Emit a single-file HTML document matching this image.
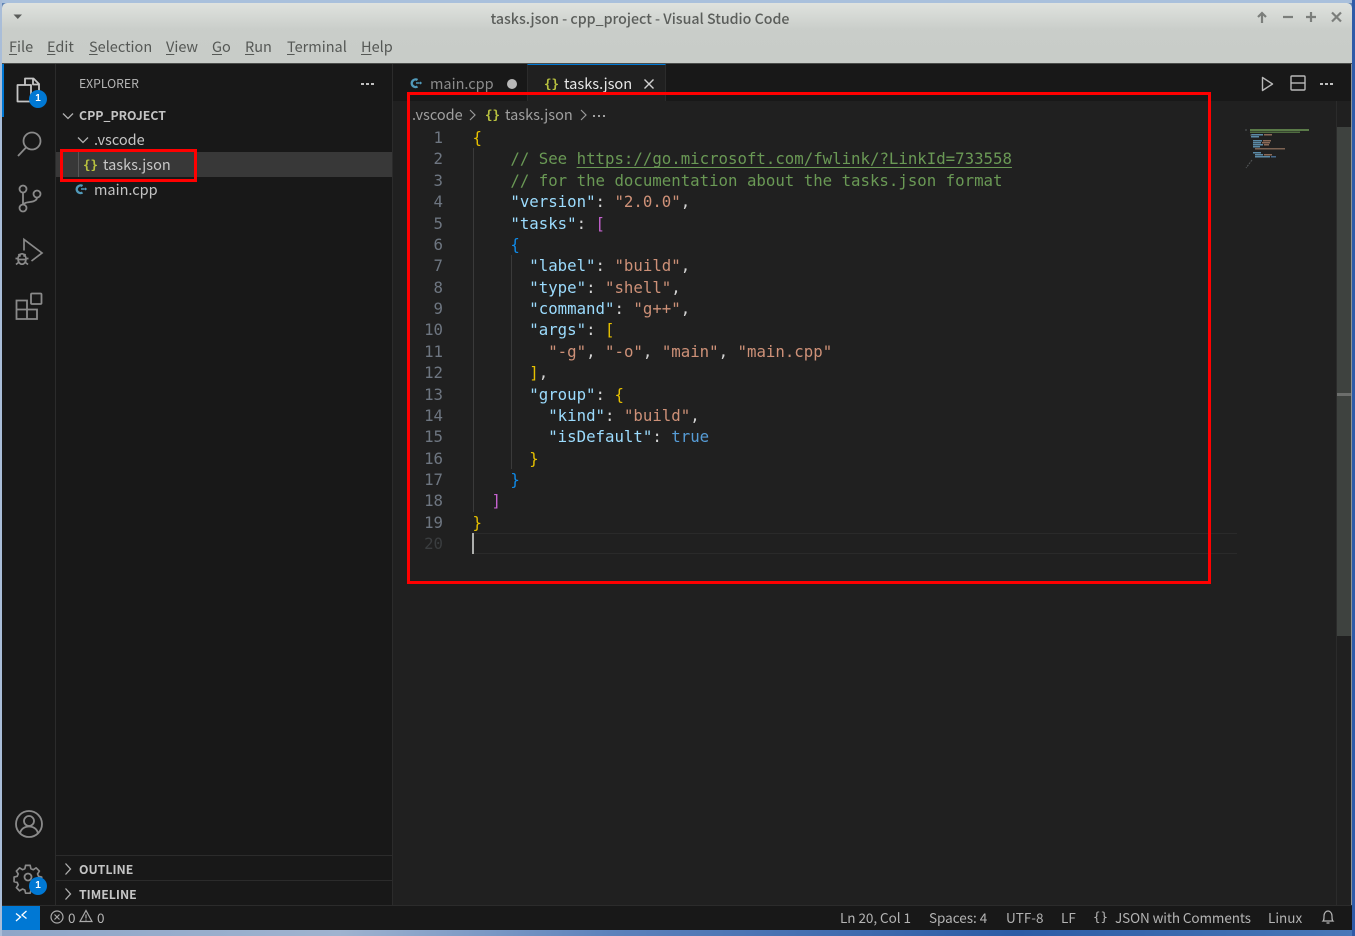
<!DOCTYPE html>
<html><head><meta charset="utf-8"><title>tasks.json - cpp_project - Visual Studio Code</title>
<style>
html,body{margin:0;padding:0;width:1355px;height:936px;overflow:hidden;background:#5f83b4}
*{box-sizing:border-box}
.a{position:absolute}
body{font-family:"Noto Sans CJK SC","Liberation Sans",sans-serif;position:relative}
#w{position:absolute;left:0;top:0;width:1355px;height:936px;filter:blur(.3px)}
.t{position:absolute;white-space:pre;line-height:20px}
u{text-underline-offset:2px;text-decoration-thickness:1px}
.ln{position:absolute;left:393px;width:50px;text-align:right;font:15.73px/21.37px "DejaVu Sans Mono",monospace;color:#6e7681}
.c{position:absolute;left:472.500px;white-space:pre;font:15.73px/21.37px "DejaVu Sans Mono",monospace;color:#d4d4d4}
.k{color:#9cdcfe}.s{color:#ce9178}.g{color:#6a9955}.b{color:#569cd6}.y{color:#e6c000}.p{color:#c562cf}.bl{color:#0f8bea}
svg{position:absolute;overflow:visible}
</style></head><body><div id="w">
<div class="a" style="left:0;top:0;width:1355px;height:3px;background:#a9c0dc"></div>
<div class="a" style="left:0;top:930px;width:1355px;height:6px;background:linear-gradient(90deg,#8ea6c8 0,#9fb3cf 25%,#5d82bb 45%,#2c5ca6 75%,#4a78b8 100%)"></div>
<div class="a" style="left:0;top:0;width:2px;height:936px;background:#a9bdd8"></div>
<div class="a" style="left:1352px;top:0;width:3px;height:936px;background:#2f5ba8"></div>

<!-- title bar -->
<div class="a" style="left:2px;top:3px;width:1350px;height:60px;background:linear-gradient(#dfe2de,#c9cdc9 45%,#c8ccc8);border-radius:5px 5px 0 0"></div>
<div class="a" style="left:2px;top:63px;width:1350px;height:1px;background:#4a4c4a"></div>
<svg style="left:13px;top:14px" width="10" height="6"><path d="M0.5 0.5H9L4.800 5z" fill="#5a5c5a"/></svg>
<div class="t" style="left:0;top:9px;width:1280px;text-align:center;font-size:14.200px;color:#5b5e5b;font-weight:500">tasks.json - cpp_project - Visual Studio Code</div>
<svg style="left:1256px;top:11px" width="90" height="13" fill="none" stroke="#7b7e7b" stroke-width="2.200">
<path d="M6 12V2M2 6l4-4 4 4"/><path d="M27 6h10"/><path d="M50 6h10M55 1v10"/><path d="M76 1.500l9 9M85 1.500l-9 9"/></svg>
<div style="font-size:14.500px;color:#555855">
<div class="t" style="left:9px;top:37px"><u>F</u>ile</div>
<div class="t" style="left:47px;top:37px"><u>E</u>dit</div>
<div class="t" style="left:89px;top:37px"><u>S</u>election</div>
<div class="t" style="left:166px;top:37px"><u>V</u>iew</div>
<div class="t" style="left:212px;top:37px"><u>G</u>o</div>
<div class="t" style="left:245px;top:37px"><u>R</u>un</div>
<div class="t" style="left:287px;top:37px"><u>T</u>erminal</div>
<div class="t" style="left:361px;top:37px"><u>H</u>elp</div>
</div>

<!-- activity bar -->
<div class="a" style="left:2px;top:64px;width:54px;height:841px;background:#181818;border-right:1px solid #2b2b2b"></div>
<div class="a" style="left:2px;top:64px;width:2px;height:53px;background:#0078d4"></div>
<svg style="left:16px;top:77px" width="26" height="28" fill="none" stroke="#c5c5c5" stroke-width="1.800" stroke-linejoin="round">
<path d="M9 8V1.500h8.500L23 7v15h-8"/><path d="M17 1.500V7.500h6"/><path d="M9 8H1.500v16.500H15V8z"/></svg>
<div class="a" style="left:29px;top:90px;width:18px;height:18px;border-radius:9px;background:#0078d4;color:#fff;font:bold 10px/18px 'Liberation Sans',sans-serif;text-align:center">1</div>
<svg style="left:16px;top:130px" width="28" height="28" fill="none" stroke="#8a8a8a" stroke-width="1.800">
<circle cx="16" cy="11" r="8.500"/><path d="M10 17.500L2 26"/></svg>
<svg style="left:17px;top:184px" width="26" height="30" fill="none" stroke="#8a8a8a" stroke-width="1.800">
<circle cx="6" cy="5" r="3.500"/><circle cx="6" cy="24" r="3.500"/><circle cx="20" cy="10" r="3.500"/><path d="M6 8.500V20.500M20 13.500c0 3-3 4-7 4.500-4 .5-6 1-7 3"/></svg>
<svg style="left:14px;top:238px" width="30" height="30" fill="none" stroke="#8a8a8a" stroke-width="1.700">
<path d="M10 12.500V1.500L28 15 17.500 23"/><ellipse cx="8" cy="21" rx="4" ry="5.200"/><path d="M4.500 16l2 2.500M11.500 16l-2 2.500M1.500 20.500h2.500M12 20.500h2.500M2 26.500l2.500-2M14 26.500l-2.500-2M4.500 21.500h7"/></svg>
<svg style="left:15px;top:292px" width="30" height="30" fill="none" stroke="#8a8a8a" stroke-width="1.800">
<rect x="16" y="1.500" width="10.500" height="10.500" rx="1"/><path d="M1.500 8.500h10.500v9h10v9.500H1.500zM1.500 17.500h10.500v9.500"/></svg>
<svg style="left:15px;top:810px" width="28" height="28" fill="none" stroke="#8a8a8a" stroke-width="1.800">
<circle cx="14" cy="14" r="13"/><circle cx="14" cy="11" r="5"/><path d="M5 23.500c1-5 5-7 9-7s8 2 9 7"/></svg>
<svg style="left:15px;top:864px" width="28" height="28" fill="none" stroke="#8a8a8a" stroke-width="1.800" stroke-linejoin="round">
<path d="M11.500 1.500h5l.8 3.600 2.600 1.100 3.100-2 3.500 3.500-2 3.100 1.100 2.600 3.400.8v5l-3.400.8-1.100 2.600 2 3.100-3.500 3.500-3.100-2-2.600 1.100-.8 3.400h-5l-.8-3.400-2.600-1.100-3.100 2-3.500-3.500 2-3.100-1.100-2.600-3.400-.8v-5l3.400-.8 1.100-2.600-2-3.100 3.500-3.500 3.100 2 2.600-1.100z" transform="scale(.92)"/><circle cx="13" cy="13" r="3.500"/></svg>
<div class="a" style="left:29px;top:877px;width:18px;height:18px;border-radius:9px;background:#0078d4;color:#fff;font:bold 10px/18px 'Liberation Sans',sans-serif;text-align:center">1</div>

<!-- sidebar -->
<div class="a" style="left:56px;top:64px;width:337px;height:841px;background:#181818;border-right:1px solid #2b2b2b"></div>
<div class="t" style="left:79px;top:73px;font-size:12.200px;color:#b5b5b5">EXPLORER</div>
<div class="a" style="left:361px;top:83px;width:3px;height:2px;background:#c0c0c0;box-shadow:5px 0 #c0c0c0,10px 0 #c0c0c0"></div>
<svg style="left:62px;top:112px" width="12" height="8" fill="none" stroke="#b0b0b0" stroke-width="1.300"><path d="M1 1.500l5 5 5-5"/></svg>
<div class="t" style="left:79px;top:105px;font-size:12.300px;font-weight:700;color:#c4c4c4">CPP_PROJECT</div>
<svg style="left:77px;top:136px" width="12" height="8" fill="none" stroke="#b0b0b0" stroke-width="1.300"><path d="M1 1.500l5 5 5-5"/></svg>
<div class="t" style="left:94px;top:130px;font-size:14.500px;color:#c4c4c4">.vscode</div>
<div class="a" style="left:56px;top:152px;width:336px;height:25px;background:#383838"></div>
<div class="a" style="left:78px;top:152px;width:1px;height:25px;background:#585858"></div>
<div class="t" style="left:83px;top:155px;font:bold 12.500px/20px 'DejaVu Sans Mono',monospace;color:#b8c13f">{}</div>
<div class="t" style="left:103px;top:155px;font-size:14.500px;color:#c8c8c8">tasks.json</div>
<svg style="left:75px;top:184px" width="13" height="11" fill="none" stroke="#519aba" stroke-width="2.400"><path d="M7.500 2A3.800 3.800 0 1 0 7.500 8.500"/><path d="M6 5h3.500" stroke-width="1.500"/><path d="M10.500 3.800v2.400M9.500 5h2.500" stroke-width="1"/></svg>
<div class="t" style="left:94px;top:180px;font-size:14.500px;color:#c4c4c4">main.cpp</div>
<div class="a" style="left:60px;top:149px;width:137px;height:33px;border:3px solid #f00"></div>
<div class="a" style="left:56px;top:855px;width:336px;height:1px;background:#2b2b2b"></div>
<div class="a" style="left:56px;top:880px;width:336px;height:1px;background:#2b2b2b"></div>
<svg style="left:64px;top:862px" width="8" height="14" fill="none" stroke="#b0b0b0" stroke-width="1.300"><path d="M1.500 1.500l5 5.500-5 5.500"/></svg>
<svg style="left:64px;top:887px" width="8" height="14" fill="none" stroke="#b0b0b0" stroke-width="1.300"><path d="M1.500 1.500l5 5.500-5 5.500"/></svg>
<div class="t" style="left:79px;top:859px;font-size:12.300px;font-weight:700;color:#c4c4c4">OUTLINE</div>
<div class="t" style="left:79px;top:884px;font-size:12.300px;font-weight:700;color:#c4c4c4">TIMELINE</div>

<!-- editor -->
<div class="a" style="left:393px;top:64px;width:959px;height:841px;background:#202020"></div>
<div class="a" style="left:393px;top:64px;width:959px;height:37px;background:#181818"></div>
<div class="a" style="left:527px;top:64px;width:139px;height:37px;background:#202020;border-top:1px solid #0078d4;border-right:1px solid #2b2b2b;border-left:1px solid #2b2b2b"></div>
<svg style="left:410px;top:78px" width="13" height="11" fill="none" stroke="#519aba" stroke-width="2.400"><path d="M7.500 2A3.800 3.800 0 1 0 7.500 8.500"/><path d="M6 5h3.500" stroke-width="1.500"/><path d="M10.500 3.800v2.400M9.500 5h2.500" stroke-width="1"/></svg>
<div class="t" style="left:430px;top:74px;font-size:14.500px;color:#8c8c8c">main.cpp</div>
<div class="a" style="left:507px;top:79px;width:10px;height:10px;border-radius:5px;background:#b8b8b8"></div>
<div class="t" style="left:544px;top:74px;font:bold 12.500px/20px 'DejaVu Sans Mono',monospace;color:#b8c13f">{}</div>
<div class="t" style="left:564px;top:74px;font-size:14.600px;color:#e8e8e8">tasks.json</div>
<svg style="left:643px;top:78px" width="12" height="12" fill="none" stroke="#d0d0d0" stroke-width="1.400"><path d="M1.500 1.500l9 9M10.500 1.500l-9 9"/></svg>
<svg style="left:1261px;top:76px" width="13" height="16" fill="none" stroke="#b8b8b8" stroke-width="1.400" stroke-linejoin="round"><path d="M1.500 1.500L11.500 8 1.500 14.500z"/></svg>
<svg style="left:1290px;top:75px" width="16" height="16" fill="none" stroke="#b8b8b8" stroke-width="1.400"><rect x="1" y="1" width="14" height="14" rx="1"/><path d="M1 8h14"/></svg>
<div class="a" style="left:1320px;top:83px;width:3px;height:2px;background:#c0c0c0;box-shadow:5px 0 #c0c0c0,10px 0 #c0c0c0"></div>

<div class="t" style="left:412px;top:105px;font-size:14.500px;color:#a0a0a0">.vscode</div>
<svg style="left:469px;top:109px" width="7" height="12" fill="none" stroke="#9a9a9a" stroke-width="1.200"><path d="M1 1l5 5-5 5"/></svg>
<div class="t" style="left:485px;top:105px;font:bold 12.500px/20px 'DejaVu Sans Mono',monospace;color:#b8c13f">{}</div>
<div class="t" style="left:505px;top:105px;font-size:14.500px;color:#a0a0a0">tasks.json</div>
<svg style="left:580px;top:109px" width="7" height="12" fill="none" stroke="#9a9a9a" stroke-width="1.200"><path d="M1 1l5 5-5 5"/></svg>
<div class="a" style="left:593px;top:115px;width:2px;height:2px;background:#a0a0a0;box-shadow:5px 0 #a0a0a0,10px 0 #a0a0a0"></div>

<!-- line numbers -->
<div class="ln" style="top:127px">1<br>2<br>3<br>4<br>5<br>6<br>7<br>8<br>9<br>10<br>11<br>12<br>13<br>14<br>15<br>16<br>17<br>18<br>19<br><span style="color:#3a3d3f">20</span></div>
<!-- indent guides -->
<div class="a" style="left:473px;top:148px;width:1px;height:364px;background:#3a3a3a"></div>
<div class="a" style="left:511px;top:255px;width:1px;height:214px;background:#3a3a3a"></div>
<!-- current line -->
<div class="a" style="left:473px;top:533px;width:764px;height:21px;border-top:1px solid #2a2a2a;border-bottom:1px solid #2a2a2a"></div>
<div class="a" style="left:472px;top:533px;width:2px;height:21px;background:#aeafad"></div>
<!-- code -->
<div class="c" style="top:127px"><span class="y">{</span>
    <span class="g">// See <u style="text-underline-offset:3px">https://go.microsoft.com/fwlink/?LinkId=733558</u></span>
    <span class="g">// for the documentation about the tasks.json format</span>
    <span class="k">"version"</span>: <span class="s">"2.0.0"</span>,
    <span class="k">"tasks"</span>: <span class="p">[</span>
    <span class="bl">{</span>
      <span class="k">"label"</span>: <span class="s">"build"</span>,
      <span class="k">"type"</span>: <span class="s">"shell"</span>,
      <span class="k">"command"</span>: <span class="s">"g++"</span>,
      <span class="k">"args"</span>: <span class="y">[</span>
        <span class="s">"-g"</span>, <span class="s">"-o"</span>, <span class="s">"main"</span>, <span class="s">"main.cpp"</span>
      <span class="y">]</span>,
      <span class="k">"group"</span>: <span class="y">{</span>
        <span class="k">"kind"</span>: <span class="s">"build"</span>,
        <span class="k">"isDefault"</span>: <span class="b">true</span>
      <span class="y">}</span>
    <span class="bl">}</span>
  <span class="p">]</span>
<span class="y">}</span></div>

<!-- minimap -->
<svg style="left:1244px;top:126px" width="70" height="46">
<rect x="6" y="3" width="59" height="2" fill="#5a7a48"/><rect x="6" y="5.500" width="50" height="1.500" fill="#4f6c40"/>
<rect x="7" y="8" width="12" height="1.500" fill="#5b8aa6"/><rect x="20" y="8" width="8" height="1.500" fill="#8a6a58"/>
<rect x="7" y="10" width="8" height="1.500" fill="#5b8aa6"/>
<rect x="9" y="14" width="9" height="1.500" fill="#5b8aa6"/><rect x="19" y="14" width="8" height="1.500" fill="#8a6a58"/>
<rect x="9" y="16" width="8" height="1.500" fill="#5b8aa6"/><rect x="18" y="16" width="8" height="1.500" fill="#8a6a58"/>
<rect x="9" y="18" width="10" height="1.500" fill="#5b8aa6"/><rect x="20" y="18" width="5" height="1.500" fill="#8a6a58"/>
<rect x="9" y="20" width="7" height="1.500" fill="#5b8aa6"/>
<rect x="11" y="22" width="30" height="1.500" fill="#7c6252"/>
<rect x="9" y="26" width="8" height="1.500" fill="#5b8aa6"/>
<rect x="11" y="28" width="8" height="1.500" fill="#5b8aa6"/><rect x="20" y="28" width="8" height="1.500" fill="#8a6a58"/>
<rect x="11" y="30" width="15" height="1.500" fill="#5b8aa6"/><rect x="27" y="30" width="5" height="1.500" fill="#46688a"/>
<path d="M2 3v2M7 8v2M8 34l-6 8" stroke="#55585a" stroke-width="1" stroke-dasharray="2 1" fill="none"/>
</svg>
<!-- scrollbar -->
<div class="a" style="left:1337px;top:127px;width:15px;height:509px;background:#3e423f"></div>
<div class="a" style="left:1337px;top:393px;width:15px;height:3px;background:#6c6e6c"></div>
<div class="a" style="left:1336px;top:101px;width:1px;height:804px;background:#2b2b2b"></div>
<div class="a" style="left:1351px;top:64px;width:1px;height:866px;background:#8f9292"></div>

<!-- red box -->
<div class="a" style="left:407px;top:92px;width:804px;height:492px;border:3px solid #f00"></div>

<!-- status bar -->
<div class="a" style="left:2px;top:905px;width:1350px;height:25px;background:#181818;border-top:1px solid #2b2b2b"></div>
<div class="a" style="left:2px;top:906px;width:38px;height:24px;background:#0078d4"></div>
<svg style="left:15px;top:910px" width="13" height="13" fill="none" stroke="#fff" stroke-width="1.300"><path d="M1 11l4.500-4L1 3.500M11.500 1L7 5l4.500 3.500"/></svg>
<svg style="left:50px;top:910px" width="14" height="14" fill="none" stroke="#aaa" stroke-width="1.200"><circle cx="7" cy="7" r="6"/><path d="M4.500 4.500l5 5M9.500 4.500l-5 5"/></svg>
<svg style="left:79px;top:909px" width="14" height="14" fill="none" stroke="#aaa" stroke-width="1.200"><path d="M7 1.500L13 12.500H1zM7 5.500v4M7 10.500v1"/></svg>
<div style="font-size:13.500px;color:#b4b4b4">
<div class="t" style="left:68px;top:907px">0</div>
<div class="t" style="left:97px;top:907px">0</div>
<div class="t" style="left:840px;top:907px;letter-spacing:-.05px">Ln 20, Col 1</div>
<div class="t" style="left:929px;top:907px;letter-spacing:-.02px">Spaces: 4</div>
<div class="t" style="left:1006px;top:907px">UTF-8</div>
<div class="t" style="left:1061px;top:907px">LF</div>
<div class="t" style="left:1093px;top:907px;font:12.500px/20px 'DejaVu Sans Mono',monospace;color:#b4b4b4">{}</div>
<div class="t" style="left:1115px;top:907px;letter-spacing:-.1px">JSON with Comments</div>
<div class="t" style="left:1268px;top:907px">Linux</div>
</div>
<svg style="left:1321px;top:910px" width="14" height="15" fill="none" stroke="#b4b4b4" stroke-width="1.200"><path d="M2 11c1-1 1-2 1-5 0-3 2-5 4-5s4 2 4 5c0 3 0 4 1 5zM5.500 13h3"/></svg>
</div></body></html>
